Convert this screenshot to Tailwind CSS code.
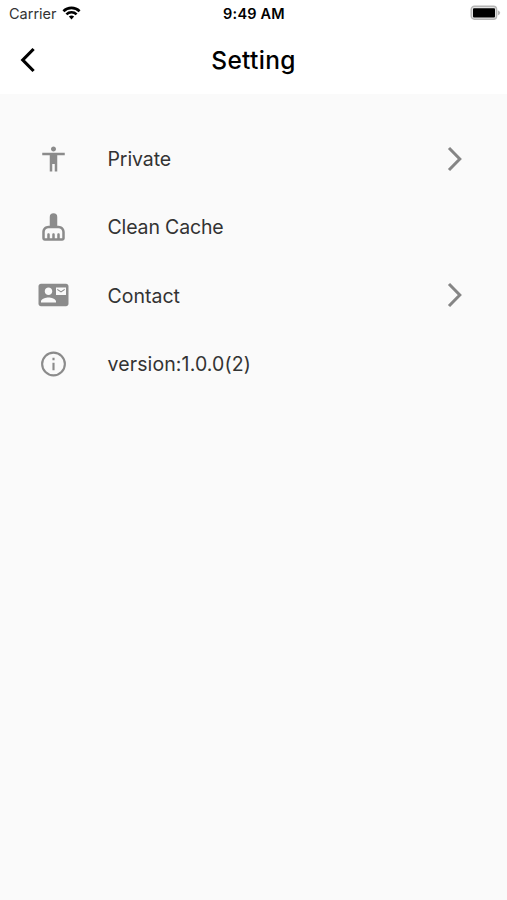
<!DOCTYPE html>
<html lang="en">
<head>
  <meta charset="UTF-8">
  <title>Setting</title>
  <script src="https://cdn.jsdelivr.net/npm/@tailwindcss/browser@4"></script>
</head>
<body class="bg-[#fafafa] font-['Inter','Liberation_Sans',sans-serif] min-h-screen">

  <!-- Header -->
  <header class="bg-white h-[94px] text-black">

    <!-- Status bar -->
    <div class="grid grid-cols-3 items-center h-[26px] pl-[9px] pr-1.5">
      <div class="flex items-center gap-[5px]">
        <span class="text-[14.5px] leading-none text-[#333] whitespace-nowrap pt-0.5">Carrier</span>
        <svg class="w-[19px] h-[14px]" viewBox="0 0 18 14" fill="none" stroke="black" stroke-width="2.6">
          <path d="M.9 5.2a11.6 11.6 0 0 1 16.2 0"/>
          <path d="M3.9 8.4a7.3 7.3 0 0 1 10.2 0"/>
          <path d="M6.4 10.6a3.8 3.8 0 0 1 5.2 0L9 13.4z" fill="black" stroke="none"/>
        </svg>
      </div>
      <span class="text-[14.5px] leading-none font-semibold text-center whitespace-nowrap tracking-[0.2px] -ml-0.5 pt-0.5">9:49 AM</span>
      <svg class="w-[31px] h-[16px] justify-self-end" viewBox="0 0 31 16">
        <rect x="1.2" y="1.3" width="25.4" height="13" rx="3.2" fill="#e4e4e4" stroke="#b5b5b5" stroke-width="1.4"/>
        <rect x="3" y="3.2" width="22" height="9.2" rx="1" fill="black"/>
        <path d="M27.8 5.2q2.4 1 2.4 2.6t-2.4 2.6z" fill="#b5b5b5"/>
      </svg>
    </div>

    <!-- Title bar -->
    <div class="grid grid-cols-[60px_1fr_60px] items-center h-[67px]">
      <svg class="w-[16px] h-[26px] ml-5" viewBox="0 0 16 26" fill="none" stroke="black" stroke-width="3.2">
        <path d="M13.6 2 2.8 13 13.6 24"/>
      </svg>
      <h1 class="text-[24.5px] leading-none font-medium text-center tracking-[0.3px] pt-0.5">Setting</h1>
    </div>
  </header>

  <!-- Setting list -->
  <ul class="pt-[30.5px] text-[19.5px] text-[#333]">
    <li class="flex items-center h-[68.4px] pl-[38px] pr-[44px]">
      <svg class="w-[31px] h-[30px] mr-[38.5px]" viewBox="0 0 24 24" fill="#8b8b8b">
        <path d="M12 2c1.1 0 2 .9 2 2s-.9 2-2 2-2-.9-2-2 .9-2 2-2zm9 7h-6v13h-2v-6h-2v6H9V9H3V7h18v2z"/>
      </svg>
      <span class="flex-1 pt-0.5 tracking-[-0.1px]">Private</span>
      <svg class="w-[16px] h-[26px]" viewBox="0 0 16 26" fill="none" stroke="#858585" stroke-width="3">
        <path d="M2 2 12.8 13 2 24"/>
      </svg>
    </li>
    <li class="flex items-center h-[68.4px] pl-[38px] pr-[44px]">
      <svg class="w-[31px] h-[30px] mr-[38.5px]" viewBox="0 0 24 24" fill="#8b8b8b">
        <path d="M16 11h-1V4a3 3 0 0 0-6 0v7H8c-2.76 0-5 2.24-5 5v5c0 1.1.9 2 2 2h14c1.1 0 2-.9 2-2v-5c0-2.76-2.24-5-5-5zm3 10h-2v-3c0-.55-.45-1-1-1s-1 .45-1 1v3h-2v-3c0-.55-.45-1-1-1s-1 .45-1 1v3H9v-3c0-.55-.45-1-1-1s-1 .45-1 1v3H5v-5c0-1.65 1.35-3 3-3h8c1.65 0 3 1.35 3 3v5z"/>
      </svg>
      <span class="flex-1 pt-0.5 tracking-[-0.15px]">Clean Cache</span>
    </li>
    <li class="flex items-center h-[68.4px] pl-[38px] pr-[44px]">
      <svg class="w-[31px] h-[30px] mr-[38.5px]" viewBox="0 0 24 24" fill="#8b8b8b">
        <path d="M21 8V7l-3 2-3-2v1l3 2 3-2zm1-5H2C.9 3 0 3.9 0 5v14c0 1.1.9 2 2 2h20c1.1 0 1.99-.9 1.99-2L24 5c0-1.1-.9-2-2-2zM8 6c1.66 0 3 1.34 3 3s-1.34 3-3 3-3-1.34-3-3 1.34-3 3-3zm6 12H2v-1c0-2 4-3.1 6-3.1s6 1.1 6 3.1v1zm8-6h-8V6h8v6z"/>
      </svg>
      <span class="flex-1 pt-0.5">Contact</span>
      <svg class="w-[16px] h-[26px]" viewBox="0 0 16 26" fill="none" stroke="#858585" stroke-width="3">
        <path d="M2 2 12.8 13 2 24"/>
      </svg>
    </li>
    <li class="flex items-center h-[68.4px] pl-[38px] pr-[44px]">
      <svg class="w-[31px] h-[30px] mr-[38.5px]" viewBox="0 0 24 24" fill="none" stroke="#8b8b8b" stroke-width="1.7">
        <circle cx="12" cy="12" r="9.1"/>
        <path d="M12 7v2M12 11v6"/>
      </svg>
      <span class="flex-1 pt-0.5 tracking-[0.12px]">version:1.0.0(2)</span>
    </li>
  </ul>

</body>
</html>
